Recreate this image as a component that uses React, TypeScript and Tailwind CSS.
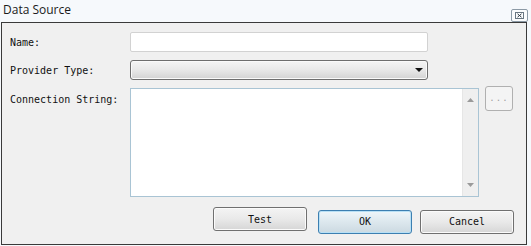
import { useState } from "react";

const mono = "font-['DejaVu_Sans_Mono','Liberation_Mono',monospace] text-[10px] text-[#111111]";

function DialogButton({ label, primary }: { label: string; primary?: boolean }) {
  return (
    <button
      type="button"
      className={
        primary
          ? `h-[24px] w-[94px] rounded-[3px] border border-[#3c7fb1] bg-gradient-to-b from-[#eef6fa] to-[#cbd9e1] shadow-[inset_0_0_0_1px_#b8e0f5] ${mono}`
          : `h-[24px] w-[94px] rounded-[3px] border border-[#707070] bg-gradient-to-b from-[#f4f4f4] via-[#e9e9e9] to-[#d6d6d6] shadow-[inset_0_0_0_1px_#fbfbfb] ${mono}`
      }
    >
      {label}
    </button>
  );
}

function App() {
  const [name, setName] = useState("");
  const [conn, setConn] = useState("");

  return (
    <div className="h-[246px] w-[531px] overflow-hidden bg-[#f6f9fc] font-['Open_Sans',sans-serif]">
      {/* title bar */}
      <div className="flex h-[22px] items-start justify-between pl-[3px] pr-[3px]">
        <span className="mt-[1px] text-[12px] leading-[18px] text-[#1b1b1b]">Data Source</span>
        <button
          type="button"
          className="mt-[9px] flex h-[13px] w-[17px] items-center justify-center rounded-[2px] border border-[#8c9aa6] bg-[#fbfcfd]"
        >
          <svg width="9" height="7" viewBox="0 0 9 7">
            <rect x="0.5" y="0.5" width="8" height="6" fill="none" stroke="#6a7782" />
            <path d="M2.5 1.8 L6.5 5.2 M6.5 1.8 L2.5 5.2" stroke="#2f3a44" strokeWidth="1" />
          </svg>
        </button>
      </div>

      {/* body */}
      <div className="mx-[1px] h-[223px] w-[526px] border border-[#3a3a3a] bg-[#f0f0f0] pl-[8px] pt-[9px]">
        <div className="flex items-center">
          <label className={`w-[120px] ${mono}`}>Name:</label>
          <input
            value={name}
            onChange={(e) => setName(e.target.value)}
            className="h-[20px] w-[298px] rounded-[2px] border border-[#d2d2d2] bg-white px-1 text-[11px] outline-none"
          />
        </div>

        <div className="mt-[8px] flex items-center">
          <label className={`w-[120px] pt-[1px] ${mono}`}>Provider Type:</label>
          <div className="flex h-[20px] w-[298px] items-center justify-end rounded-[3px] border border-[#6e6e6e] bg-gradient-to-b from-[#f5f5f5] via-[#e8e8e8] to-[#d3d3d3] pr-[4px] shadow-[inset_0_0_0_1px_#fafafa]">
            <svg width="8" height="4" viewBox="0 0 8 4">
              <path d="M0 0 H8 L4 4 Z" fill="#111111" />
            </svg>
          </div>
        </div>

        <div className="mt-[8px] flex items-start">
          <label className={`w-[120px] pt-[4px] ${mono}`}>Connection String:</label>
          <div className="flex h-[109px] w-[349px] border border-[#a9c4d4] bg-white">
            <textarea
              value={conn}
              onChange={(e) => setConn(e.target.value)}
              className="h-full flex-1 resize-none bg-white px-1 text-[11px] outline-none"
            />
            <div className="flex w-[16px] flex-col items-center justify-between border-l border-[#e6e6e6] bg-[#efefef] py-[9px]">
              <svg width="7" height="4" viewBox="0 0 7 4">
                <path d="M0 4 H7 L3.5 0 Z" fill="#9a9a9a" />
              </svg>
              <svg width="7" height="4" viewBox="0 0 7 4">
                <path d="M0 0 H7 L3.5 4 Z" fill="#9a9a9a" />
              </svg>
            </div>
          </div>
          <button
            type="button"
            disabled
            className="ml-[6px] -mt-[2px] flex h-[25px] w-[28px] items-center justify-center rounded-[3px] border border-[#b0b0b0] bg-[#f4f4f4] font-['DejaVu_Sans_Mono',monospace] text-[9px] tracking-[1px] text-[#a0a0a0]"
          >
            ...
          </button>
        </div>

        <div className="mt-[10px] flex pl-[203px]">
          <DialogButton label="Test" />
          <div className="ml-[11px]">
            <DialogButton label="OK" primary />
          </div>
          <div className="ml-[8px]">
            <DialogButton label="Cancel" />
          </div>
        </div>
      </div>
    </div>
  );
}

export default App;
